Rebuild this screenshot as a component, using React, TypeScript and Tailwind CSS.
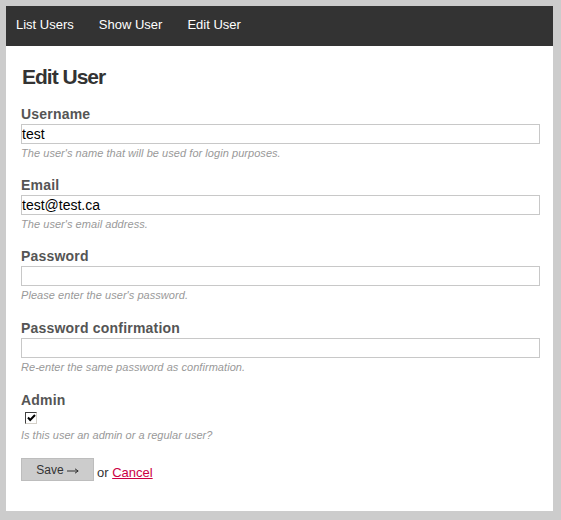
import React from "react";

const font = { fontFamily: '"Liberation Sans", Arial, sans-serif' };

function Field({
  label,
  value,
  hint,
  gap,
}: {
  label: string;
  value: string;
  hint: string;
  gap: string;
}) {
  return (
    <div className={gap}>
      <div className="h-[18px] text-[14px] leading-[18px] font-bold text-[#555] tracking-[0.2px]">
        {label}
      </div>
      <input
        readOnly
        value={value}
        className="mt-[1px] block w-[519px] h-[20px] border border-[#c8c8c8] bg-white px-0 text-[14px] leading-[18px] text-black outline-none"
        style={font}
      />
      <div className="mt-[2px] h-[14px] text-[11px] leading-[14px] italic text-[#999] tracking-[0.05px]">
        {hint}
      </div>
    </div>
  );
}

export default function App() {
  return (
    <div className="w-[561px] h-[520px] bg-[#cccccc] pt-[6px] pl-[6px]" style={font}>
      <div className="w-[547px]">
        <div className="h-[40px] bg-[#333333] flex pl-[10px] gap-[25px] text-white text-[13px] leading-[38px]">
          <span>List Users</span>
          <span>Show User</span>
          <span>Edit User</span>
        </div>
        <div className="bg-white h-[465px] pl-[15px] pt-[19px]">
          <h1 className="text-[21px] leading-[24px] font-bold tracking-[-1px] text-[#333] pl-[1px]">
            Edit User
          </h1>
          <div className="mt-[16px]">
            <Field gap="" label="Username" value="test" hint="The user's name that will be used for login purposes." />
            <Field gap="mt-[16px]" label="Email" value="test@test.ca" hint="The user's email address." />
            <Field gap="mt-[16px]" label="Password" value="" hint="Please enter the user's password." />
            <Field gap="mt-[17px]" label="Password confirmation" value="" hint="Re-enter the same password as confirmation." />
            <div className="mt-[17px]">
              <div className="h-[18px] text-[14px] leading-[18px] font-bold text-[#555] tracking-[0.2px]">
                Admin
              </div>
              <div className="mt-[3px] ml-[4px] w-[12px] h-[12px] border border-t-[#404040] border-l-[#404040] border-b-[#d4d0c8] border-r-[#d4d0c8] bg-white flex items-center justify-center">
                <svg width="9" height="8" viewBox="0 0 9 8">
                  <path d="M1 3.5 L3.2 6 L8 1" stroke="#000" strokeWidth="2" fill="none" />
                </svg>
              </div>
              <div className="mt-[4px] h-[14px] text-[11px] leading-[14px] italic text-[#999]">
                Is this user an admin or a regular user?
              </div>
            </div>
            <div className="mt-[16px] flex items-start">
              <button
                className="w-[73px] h-[23px] bg-[#cccccc] border border-[#bdbdbd] text-[12px] text-[#333] leading-[20px] flex items-center justify-center gap-[3px]"
                style={font}
              >
                <span>Save</span>
                <svg width="12" height="6" viewBox="0 0 12 6" className="relative top-[1px]">
                  <path d="M0 3 H11" stroke="#333" strokeWidth="1" />
                  <path d="M8 0.8 L11.2 3 L8 5.2" stroke="#333" strokeWidth="1" fill="none" />
                </svg>
              </button>
              <span className="ml-[3px] mt-[7px] text-[13px] leading-[16px] text-[#333]">
                or{" "}
                <a href="#" className="text-[#cc0044] underline">
                  Cancel
                </a>
              </span>
            </div>
          </div>
        </div>
      </div>
    </div>
  );
}
